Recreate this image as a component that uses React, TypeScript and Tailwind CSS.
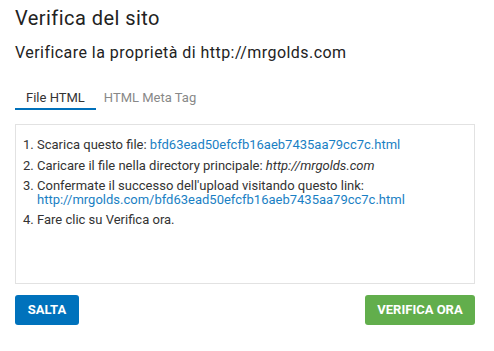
import React from "react";

export default function App() {
  return (
    <div className="w-[494px] h-[351px] bg-white pl-[15px] pr-[19px] pt-[6px] text-[#222]" style={{ fontFamily: "Roboto, 'Liberation Sans', sans-serif" }}>
      <h1 className="text-[20px] leading-[24px] tracking-[0.45px] text-[#222]">Verifica del sito</h1>
      <h2 className="mt-[13px] text-[16px] leading-[20px] tracking-[0.45px] text-[#222]">Verificare la proprietà di http://mrgolds.com</h2>
      <div className="mt-[27px] flex text-[13px] leading-[16px]">
        <div className="px-[11px] pb-[2px] border-b-2 border-[#0070ba] text-[#333]">File HTML</div>
        <div className="px-[8px] pb-[2px] text-[#888]">HTML Meta Tag</div>
      </div>
      <div className="mt-[14px] h-[160px] border border-[#e2e2e2] pt-[13px] pl-[21px] text-[13px] leading-[13.5px] text-[#333]">
        <ol className="list-decimal">
          <li className="mb-[7px]">
            Scarica questo file: <a className="text-[#1a7fc4]">bfd63ead50efcfb16aeb7435aa79cc7c.html</a>
          </li>
          <li className="mb-[7px]">
            Caricare il file nella directory principale: <i>http://mrgolds.com</i>
          </li>
          <li className="mb-[7px]">
            Confermate il successo dell'upload visitando questo link:
            <br />
            <a className="text-[#1a7fc4]">http://mrgolds.com/bfd63ead50efcfb16aeb7435aa79cc7c.html</a>
          </li>
          <li>Fare clic su Verifica ora.</li>
        </ol>
      </div>
      <div className="mt-[11px] flex justify-between">
        <button className="h-[30px] w-[64px] rounded-[3px] bg-[#0072bc] text-white font-bold text-[13px]">SALTA</button>
        <button className="h-[30px] w-[110px] rounded-[3px] bg-[#62ae4c] text-white font-bold text-[13px]">VERIFICA ORA</button>
      </div>
    </div>
  );
}
